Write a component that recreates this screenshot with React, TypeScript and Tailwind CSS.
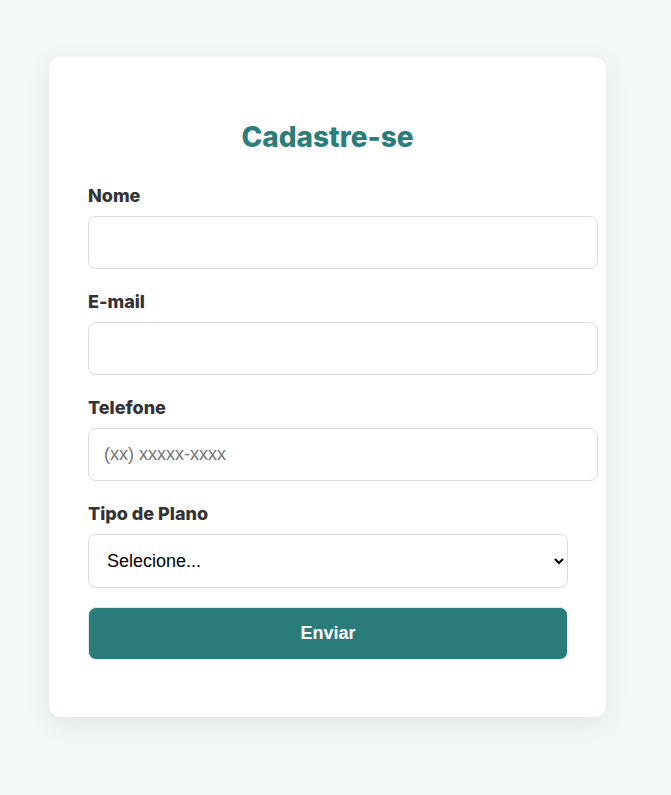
import { useState } from 'react';

const fields = [
  { id: 'nome', label: 'Nome', type: 'text', placeholder: '' },
  { id: 'email', label: 'E-mail', type: 'email', placeholder: '' },
  { id: 'telefone', label: 'Telefone', type: 'tel', placeholder: '(xx) xxxxx-xxxx' },
];

export default function App() {
  const [plano, setPlano] = useState('');

  return (
    <div className="min-h-[795px] bg-[#f4f7f8] pt-[57px] pl-[49px] font-['Inter',sans-serif]">
      <div className="w-[557px] rounded-xl bg-white px-[39px] pt-[63px] pb-[57px] shadow-[0_6px_24px_rgba(0,0,0,0.08)]">
        <h2 className="text-center text-[28px] leading-[34px] font-extrabold text-[#2a7d7b]">Cadastre-se</h2>

        <form className="mt-[31px]" onSubmit={(e) => e.preventDefault()}>
          {fields.map((f) => (
            <div key={f.id} className="mb-[22px]">
              <label htmlFor={f.id} className="mb-[9px] block text-[18px] leading-[22px] font-extrabold text-[#333]">
                {f.label}
              </label>
              <input
                id={f.id}
                type={f.type}
                placeholder={f.placeholder}
                className="block h-[53px] w-[510px] rounded-lg border border-[#dcdcdc] bg-white px-[15px] font-['Liberation_Sans',Arial,sans-serif] text-[18px] text-black placeholder:text-[#757575] outline-none"
              />
            </div>
          ))}

          <div className="mb-[19px]">
            <label htmlFor="plano" className="mb-[9px] block text-[18px] leading-[22px] font-extrabold text-[#333]">
              Tipo de Plano
            </label>
            <select
              id="plano"
              value={plano}
              onChange={(e) => setPlano(e.target.value)}
              className="block h-[54px] w-[480px] rounded-lg border border-[#dcdcdc] bg-white pl-[14px] pr-[8px] font-['Liberation_Sans',Arial,sans-serif] text-[18px] text-black outline-none"
            >
              <option value="">Selecione...</option>
              <option value="basico">Básico</option>
              <option value="premium">Premium</option>
            </select>
          </div>

          <button
            type="submit"
            className="block h-[53px] w-[480px] rounded-lg border border-[#e3eeee] bg-[#2a7c7b] font-['Liberation_Sans',Arial,sans-serif] text-[18px] font-bold text-white"
          >
            Enviar
          </button>
        </form>
      </div>
    </div>
  );
}
